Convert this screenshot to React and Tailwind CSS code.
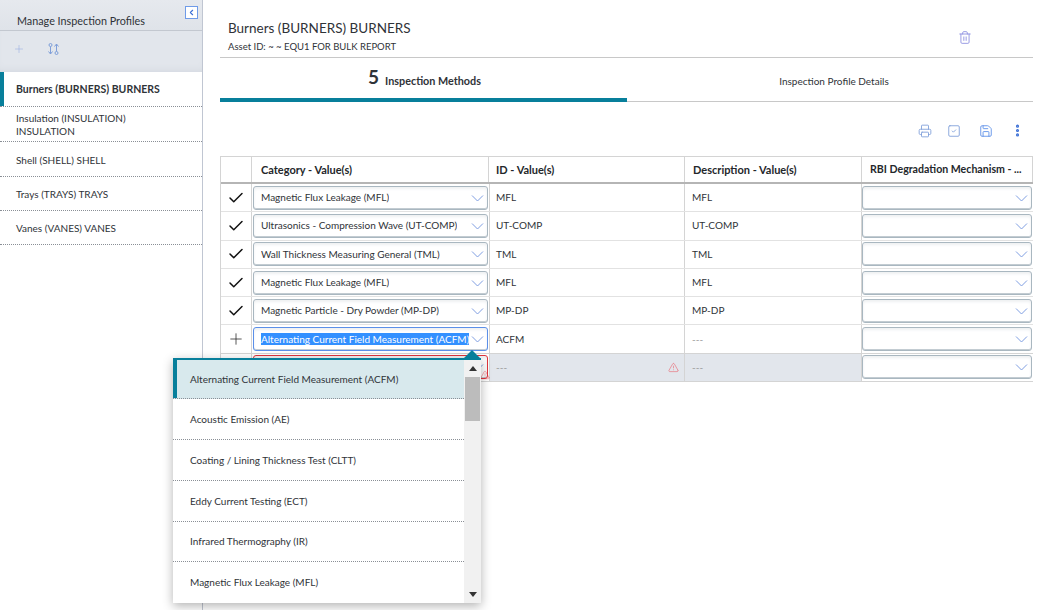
import React from 'react';
import { Plus, Check, Printer, Save, Trash2, SquareCheck, EllipsisVertical, TriangleAlert, ChevronLeft } from 'lucide-react';

const profiles = [
    { label: 'Burners (BURNERS) BURNERS', active: true, h: 'h-[35px]' },
    { label: 'Insulation (INSULATION) INSULATION', h: 'h-[35px]' },
    { label: 'Shell (SHELL) SHELL', h: 'h-[35px]' },
    { label: 'Trays (TRAYS) TRAYS', h: 'h-[34px]' },
    { label: 'Vanes (VANES) VANES', h: 'h-[34px]' },
];

const rows = [
    { cat: 'Magnetic Flux Leakage (MFL)', id: 'MFL', desc: 'MFL' },
    { cat: 'Ultrasonics - Compression Wave (UT-COMP)', id: 'UT-COMP', desc: 'UT-COMP' },
    { cat: 'Wall Thickness Measuring General (TML)', id: 'TML', desc: 'TML' },
    { cat: 'Magnetic Flux Leakage (MFL)', id: 'MFL', desc: 'MFL' },
    { cat: 'Magnetic Particle - Dry Powder (MP-DP)', id: 'MP-DP', desc: 'MP-DP' },
];

const options = [
    { label: 'Alternating Current Field Measurement (ACFM)', h: 'h-[39px]' },
    { label: 'Acoustic Emission (AE)', h: 'h-[41px]' },
    { label: 'Coating / Lining Thickness Test (CLTT)', h: 'h-[41px]' },
    { label: 'Eddy Current Testing (ECT)', h: 'h-[41px]' },
    { label: 'Infrared Thermography (IR)', h: 'h-[40px]' },
    { label: 'Magnetic Flux Leakage (MFL)', h: 'h-[41px]' },
];

const gridCols = 'grid grid-cols-[31px_237px_196px_177px_171px]';

const Chevron = () => (
    <svg width="13" height="8" viewBox="0 0 13 8" fill="none" className="shrink-0">
        <path d="M1 1.5 L6.5 7 L12 1.5" stroke="#7f9ee2" strokeWidth="1" />
    </svg>
);

const SortIcon = () => (
    <svg width="11" height="12" viewBox="0 0 11 12" fill="none" stroke="#7f9fd9" strokeWidth="1">
        <circle cx="2.5" cy="2" r="1.5" />
        <path d="M2.5 3.5 V11 M0.5 8.5 L2.5 11 L4.5 8.5" />
        <circle cx="8.5" cy="10" r="1.5" />
        <path d="M8.5 8.5 V1 M6.5 3.5 L8.5 1 L10.5 3.5" />
    </svg>
);

const SelectBox = ({ children, className = 'border-[#a9b7c0]', margin = 'mx-px' }) => (
    <div className={`h-[24px] ${margin} flex items-center justify-between rounded-[3px] border bg-white shadow-[inset_0_-1px_0_#c3ccd2,inset_0_2px_3px_#eef0f2] pl-[7px] pr-[3px] ${className}`}>
        <span className="truncate whitespace-pre">{children}</span>
        <Chevron />
    </div>
);

const App = () => {
    return (
        <div className="relative w-[1045px] h-[610px] overflow-hidden bg-white flex text-[10px] leading-[13px] text-[#2f3338] font-['Lato',sans-serif]">
            {/* left panel */}
            <div className="w-[203px] shrink-0 border-r border-[#c0c6d2]">
                <div className="h-[31px] bg-gradient-to-b from-[#e6e9ee] to-[#dfe3e9] border-b border-[#c3c8d0] flex items-center justify-between pl-[17px] pr-[4px]">
                    <span className="text-[10.8px] mt-[10px]">Manage Inspection Profiles</span>
                    <div className="w-[13px] h-[13px] mt-[-6px] border border-[#6f9be8] bg-white flex items-center justify-center">
                        <ChevronLeft className="w-[9px] h-[9px] text-[#3b6fd6]" strokeWidth={3} />
                    </div>
                </div>
                <div className="h-[41px] bg-[#e2e6ec] flex items-center gap-[23px] pl-[13px] pb-[6px] shadow-[inset_0_-6px_8px_-6px_#cfd4db]">
                    <Plus className="w-[12px] h-[12px] text-[#8ea6e0]" strokeWidth={1} />
                    <SortIcon />
                </div>
                {profiles.map((p) => (
                    <div
                        key={p.label}
                        className={`${p.h} flex items-center pl-[16px] pr-[40px] border-b border-dotted border-[#8a8f96] ${p.active ? 'font-bold text-[10.5px] !pr-0 shadow-[inset_4px_0_0_#087f9b]' : 'pt-[2px]'}`}
                    >
                        {p.label}
                    </div>
                ))}
            </div>

            {/* main panel */}
            <div className="flex-1 pl-[17px] pr-[12px]">
                <div className="h-[58px] border-b border-[#c8c8c8] flex justify-between pl-[8px] pr-[61px]">
                    <div className="pt-[19px]">
                        <div className="text-[13.5px] leading-[18px]">Burners (BURNERS) BURNERS</div>
                        <div className="text-[9.5px] leading-[13px] mt-[3px]">Asset ID: ~ ~ EQU1 FOR BULK REPORT</div>
                    </div>
                    <Trash2 className="w-[14px] h-[15px] mt-[30px] text-[#8d8fe0]" strokeWidth={1.5} />
                </div>

                <div className="h-[44px] flex border-b border-[#c8c8c8]">
                    <div className="w-[407px] h-[44px] border-b-[4px] border-[#087f9b] flex items-center justify-center gap-[6px] pl-[2px] font-bold">
                        <span className="text-[19px] leading-[22px] mt-[-2px]">5</span>
                        <span className="text-[10.8px] mt-[4px]">Inspection Methods</span>
                    </div>
                    <div className="flex-1 flex items-center justify-center pl-[8px] pt-[3px]">Inspection Profile Details</div>
                </div>

                <div className="h-[54px] flex items-center justify-end pr-[8px] pt-[3px]">
                    <Printer className="w-[14px] h-[14px] text-[#7f9fd9] mr-[15px]" strokeWidth={1.5} />
                    <SquareCheck className="w-[14px] h-[14px] text-[#7f9fd9] mr-[18px]" strokeWidth={1.5} />
                    <Save className="w-[14px] h-[14px] text-[#5b8fe8] mr-[17px]" strokeWidth={1.5} />
                    <EllipsisVertical className="w-[15px] h-[15px] text-[#3b6fd6]" strokeWidth={3} />
                </div>

                {/* table */}
                <div className="border-t border-l border-[#d4d4d4] w-[813px]">
                    <div className={`${gridCols} h-[27px] border-b-2 border-[#b5b5b5] font-bold text-[11px] text-[#24272b]`}>
                        <div className="border-r border-[#d4d4d4]" />
                        <div className="border-r border-[#d4d4d4] pl-[9px] flex items-center">Category - Value(s)</div>
                        <div className="border-r border-[#d4d4d4] pl-[7px] flex items-center">ID - Value(s)</div>
                        <div className="border-r border-[#d4d4d4] pl-[8px] flex items-center">Description - Value(s)</div>
                        <div className="border-r border-[#d4d4d4] pl-[8px] flex items-center text-[10.6px]">RBI Degradation Mechanism - ...</div>
                    </div>
                    {rows.map((r, i) => (
                        <div key={i} className={`${gridCols} h-[28.3px] border-b border-[#e2e2e2] items-center`}>
                            <div className="h-full flex items-center justify-center border-r border-[#d4d4d4]">
                                <Check className="w-[18px] h-[18px] text-[#111]" strokeWidth={2} />
                            </div>
                            <SelectBox>{r.cat}</SelectBox>
                            <div className="h-full flex items-center pl-[6px] border-r border-l border-[#d4d4d4]">{r.id}</div>
                            <div className="h-full flex items-center pl-[7px] border-r border-[#d4d4d4]">{r.desc}</div>
                            <SelectBox margin="mr-px"> </SelectBox>
                        </div>
                    ))}
                    <div className={`${gridCols} h-[28.3px] border-b border-[#d4d4d4] items-center`}>
                        <div className="h-full flex items-center justify-center border-r border-[#d4d4d4]">
                            <Plus className="w-[18px] h-[18px] text-[#222]" strokeWidth={1} />
                        </div>
                        <SelectBox className="border-[#5b8fe8]">
                            <span className="bg-[#3390ff] text-white">Alternating Current Field Measurement (ACFM)</span>
                        </SelectBox>
                        <div className="h-full flex items-center pl-[6px] border-r border-l border-[#d4d4d4]">ACFM</div>
                        <div className="h-full flex items-center pl-[7px] border-r border-[#d4d4d4] text-[#9a9a9a]">---</div>
                        <SelectBox margin="mr-px"> </SelectBox>
                    </div>
                    <div className={`${gridCols} h-[28.3px] border-b border-[#d4d4d4] items-center`}>
                        <div className="h-full border-r border-[#d4d4d4]" />
                        <div className="relative">
                            <SelectBox className="border-[#e0353c]"> </SelectBox>
                            <TriangleAlert className="absolute right-[-1px] bottom-[-1px] w-[10px] h-[10px] text-[#ee3b46]" strokeWidth={1} />
                        </div>
                        <div className="h-full flex items-center justify-between pl-[6px] pr-[5px] bg-[#e2e6ec] border-r border-l border-[#d4d4d4] text-[#9a9a9a]">
                            <span>---</span>
                            <TriangleAlert className="w-[11px] h-[11px] text-[#ee3b46]" strokeWidth={1} />
                        </div>
                        <div className="h-full flex items-center pl-[7px] bg-[#e2e6ec] border-r border-[#d4d4d4] text-[#9a9a9a]">---</div>
                        <SelectBox margin="mr-px"> </SelectBox>
                    </div>
                </div>
            </div>

            {/* dropdown menu */}
            <div className="absolute left-[173px] top-[358px] w-[308px] h-[245px] bg-white shadow-[0_3px_10px_rgba(0,0,0,0.3)] border-t-2 border-[#087f9b] flex">
                <div className="absolute right-[1px] top-[-10px] w-0 h-0 border-x-[8px] border-x-transparent border-b-[8px] border-b-[#087f9b]" />
                <div className="flex-1">
                    {options.map((o, i) => (
                        <div
                            key={o.label}
                            className={`${o.h} flex items-center pl-[17px] border-b border-dotted border-[#8a8f96] ${i === 5 ? 'border-b-0' : ''} ${i === 0 ? 'bg-[#d8e9ed] shadow-[inset_4px_0_0_#087f9b]' : ''}`}
                        >
                            {o.label}
                        </div>
                    ))}
                </div>
                <div className="w-[17px] bg-[#f1f1f1] flex flex-col items-center justify-between pb-[6px]">
                    <div className="w-full">
                        <div className="h-[17px] flex items-center justify-center">
                            <div className="w-0 h-0 border-x-[4px] border-x-transparent border-b-[5px] border-b-[#333]" />
                        </div>
                        <div className="mx-auto w-[15px] h-[44px] bg-[#bcbcbc]" />
                    </div>
                    <div className="w-0 h-0 border-x-[4px] border-x-transparent border-t-[5px] border-t-[#333]" />
                </div>
            </div>
        </div>
    );
};

export default App;
